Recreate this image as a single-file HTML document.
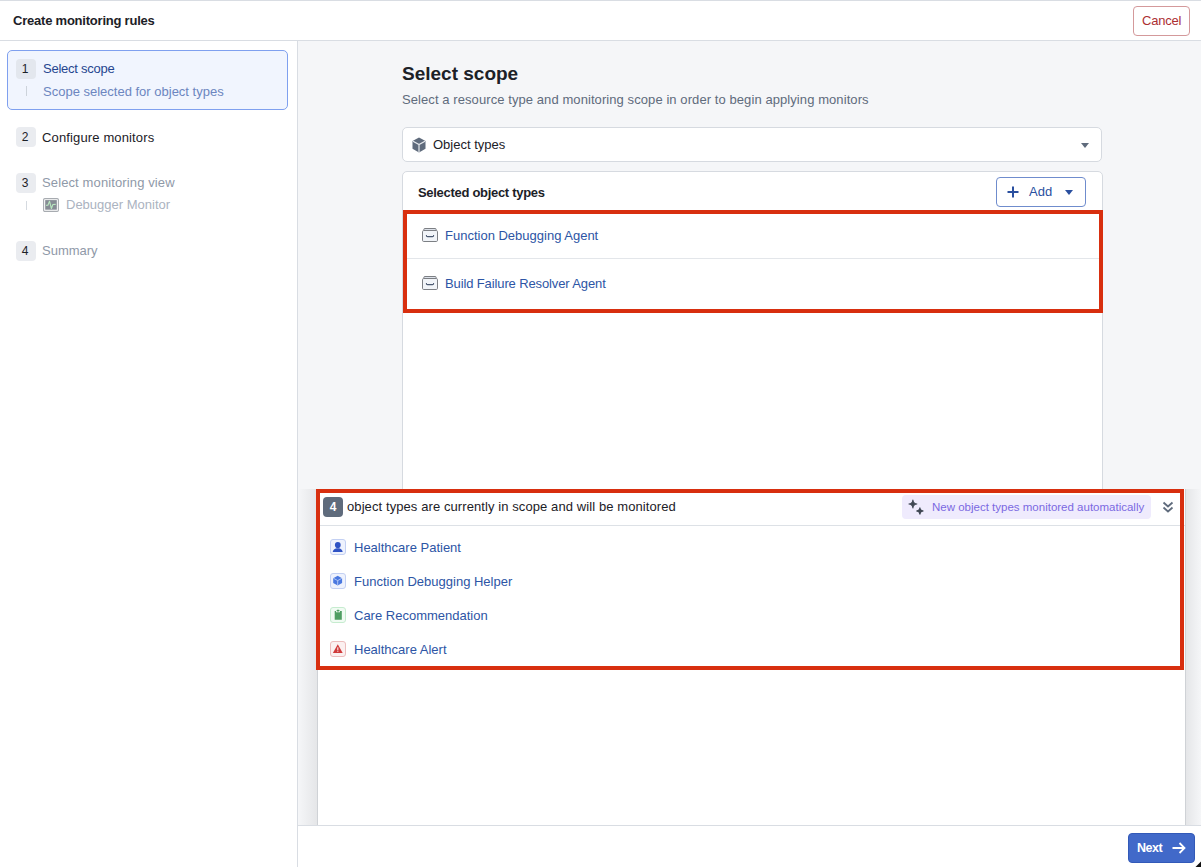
<!DOCTYPE html>
<html><head><meta charset="utf-8">
<style>
*{box-sizing:border-box;margin:0;padding:0}
html,body{width:1201px;height:867px;overflow:hidden;background:#fff;font-family:"Liberation Sans",sans-serif;color:#1c2127}
.a{position:absolute}
.t{position:absolute;white-space:nowrap;font-size:13px;line-height:16px}
.b{font-weight:700}
.badge{position:absolute;width:20px;height:20px;border-radius:4px;background:#eaecf0;font-size:12px;line-height:20px;text-align:center;text-indent:-2px;color:#1c2127}
</style></head><body>
<!-- top line -->
<div class="a" style="left:0;top:0;width:1201px;height:1px;background:#d9dde3"></div>
<!-- header -->
<div class="a" style="left:0;top:40px;width:1201px;height:1px;background:#d9dde3"></div>
<div class="t b" id="hdr" style="left:13px;top:13px;letter-spacing:-0.22px">Create monitoring rules</div>
<div class="a" style="left:1133px;top:6px;width:57px;height:30px;border:1px solid #d4999b;border-radius:4px"></div>
<div class="t" id="cancel" style="left:1142px;top:13px;letter-spacing:-0.2px;color:#ac2f33">Cancel</div>

<!-- sidebar -->
<div class="a" style="left:297px;top:41px;width:1px;height:826px;background:#d9dde3"></div>
<div class="a" style="left:7px;top:50px;width:281px;height:60px;border:1px solid #7fa0ef;border-radius:5px;background:#f1f5fe"></div>
<div class="badge" style="left:16px;top:59px;background:#e3e7ee">1</div>
<div class="t" id="s1" style="left:43px;top:61px;letter-spacing:-0.25px;color:#26468f">Select scope</div>
<div class="a" style="left:26px;top:86px;width:1px;height:10px;background:#cdd3db"></div>
<div class="t" id="s1b" style="left:43px;top:84px;color:#6c86c0">Scope selected for object types</div>

<div class="badge" style="left:16px;top:127px">2</div>
<div class="t" id="s2" style="left:42px;top:130px;letter-spacing:0.14px">Configure monitors</div>

<div class="badge" style="left:16px;top:173px">3</div>
<div class="t" id="s3" style="left:42px;top:175px;letter-spacing:0.12px;color:#8f99a8">Select monitoring view</div>
<div class="a" style="left:26px;top:201px;width:1px;height:9px;background:#d5dae0"></div>
<svg class="a" style="left:43px;top:198px" width="16" height="14" viewBox="0 0 16 14"><rect x="0.6" y="0.6" width="14.8" height="12.8" rx="1.2" fill="#fff" stroke="#a7abb0" stroke-width="1.1"/><rect x="2.2" y="2.1" width="11.6" height="9.6" fill="#868c94"/><polyline points="3.1,7.4 4.9,7.2 6.5,3.2 8.4,10.5 9.9,6.5 12.7,6.4" fill="none" stroke="#b8e6bf" stroke-width="1.1" stroke-linejoin="round"/></svg>
<div class="t" id="s3b" style="left:66px;top:197px;color:#abb3bf">Debugger Monitor</div>

<div class="badge" style="left:16px;top:241px">4</div>
<div class="t" id="s4" style="left:42px;top:243px;color:#8f99a8">Summary</div>

<!-- main bg -->
<div class="a" style="left:298px;top:41px;width:903px;height:784px;background:#f5f6f8"></div>
<div class="t b" id="title" style="left:402px;top:62px;font-size:19px;line-height:24px">Select scope</div>
<div class="t" id="sub" style="left:402px;top:92px;letter-spacing:0.08px;color:#5f6b7c">Select a resource type and monitoring scope in order to begin applying monitors</div>

<!-- dropdown -->
<div class="a" style="left:402px;top:127px;width:700px;height:35px;background:#fff;border:1px solid #d6dae0;border-radius:5px"></div>
<svg class="a" style="left:412px;top:137px" width="14" height="16" viewBox="0 0 14 16"><path d="M7 0.5 L13.5 4 L13.5 11.8 L7 15.5 L0.5 11.8 L0.5 4 Z" fill="#5f6b7c"/><path d="M1 4.2 L7 7.6 L13 4.2 M7 7.6 L7 15.3" fill="none" stroke="#e6e9ed" stroke-width="1.2"/></svg>
<div class="t" id="ot" style="left:433px;top:137px">Object types</div>
<svg class="a" style="left:1081px;top:143px" width="8" height="5" viewBox="0 0 8 5"><path d="M0 0 H8 L4 5 Z" fill="#5f6b7c"/></svg>

<!-- card -->
<div class="a" style="left:402px;top:171px;width:701px;height:700px;background:#fff;border:1px solid #d6dae0;border-radius:5px"></div>
<div class="t b" id="sot" style="left:418px;top:185px;letter-spacing:-0.3px">Selected object types</div>
<div class="a" style="left:996px;top:177px;width:90px;height:30px;border:1px solid #6f8ccd;border-radius:4px;background:#fff"></div>
<svg class="a" style="left:1007px;top:186px" width="12" height="12" viewBox="0 0 12 12"><path d="M6 0.5 V11.5 M0.5 6 H11.5" stroke="#2a4f9f" stroke-width="2"/></svg>
<div class="t" id="add" style="left:1029px;top:184px;color:#2a4f9f">Add</div>
<svg class="a" style="left:1065px;top:190px" width="8" height="5" viewBox="0 0 8 5"><path d="M0 0 H8 L4 5 Z" fill="#2a4f9f"/></svg>

<div class="a" style="left:407px;top:258px;width:692px;height:1px;background:#e3e6ea"></div>
<svg class="a" style="left:422px;top:228px" width="16" height="14" viewBox="0 0 16 14"><path d="M1.8 2.6 V1.6 Q1.8 0.5 2.9 0.5 H13.1 Q14.2 0.5 14.2 1.6 V2.6" fill="#dde2ea" stroke="#7c7f84"/><rect x="0.5" y="2.5" width="15" height="11" rx="1.2" fill="#f1f4f8" stroke="#7c7f84"/><path d="M4.3 6.9 Q4.3 8.6 5.6 8.6 H10.4 Q11.7 8.6 11.7 6.9" fill="none" stroke="#4a5870" stroke-width="1.05"/></svg>
<div class="t" id="it1" style="left:445px;top:228px;color:#2d55a5">Function Debugging Agent</div>
<svg class="a" style="left:422px;top:276px" width="16" height="14" viewBox="0 0 16 14"><path d="M1.8 2.6 V1.6 Q1.8 0.5 2.9 0.5 H13.1 Q14.2 0.5 14.2 1.6 V2.6" fill="#dde2ea" stroke="#7c7f84"/><rect x="0.5" y="2.5" width="15" height="11" rx="1.2" fill="#f1f4f8" stroke="#7c7f84"/><path d="M4.3 6.9 Q4.3 8.6 5.6 8.6 H10.4 Q11.7 8.6 11.7 6.9" fill="none" stroke="#4a5870" stroke-width="1.05"/></svg>
<div class="t" id="it2" style="left:445px;top:276px;letter-spacing:-0.12px;color:#2d55a5">Build Failure Resolver Agent</div>
<div class="a" style="left:403px;top:210px;width:700px;height:103px;border:4px solid #d82f0f"></div>

<!-- overlay panel -->
<div class="a" style="left:298px;top:489px;width:19px;height:336px;background:linear-gradient(to right,rgba(0,0,0,0),rgba(17,20,24,0.07))"></div>
<div class="a" style="left:1186px;top:489px;width:15px;height:336px;background:linear-gradient(to left,rgba(0,0,0,0),rgba(17,20,24,0.07))"></div>
<div class="a" style="left:317px;top:489px;width:869px;height:336px;background:#fff;border-left:1px solid #cfd2d6;border-right:1px solid #cfd2d6"></div>
<div class="badge" style="left:323px;top:497px;background:#5f6b7c;color:#fff;font-weight:700;font-size:12px;text-indent:0">4</div>
<div class="t" id="scope" style="left:347px;top:499px;letter-spacing:0.09px">object types are currently in scope and will be monitored</div>
<div class="a" style="left:902px;top:495px;width:249px;height:24px;background:#efebfd;border-radius:4px"></div>
<svg class="a" style="left:904px;top:496px" width="24" height="22" viewBox="0 0 24 22"><path d="M8.9 4.0 Q9.200000000000001 7.7 12.9 8 Q9.200000000000001 8.3 8.9 12.0 Q8.6 8.3 4.9 8 Q8.6 7.7 8.9 4.0Z M15.9 11.7 Q16.18 14.72 19.2 15 Q16.18 15.28 15.9 18.3 Q15.620000000000001 15.28 12.600000000000001 15 Q15.620000000000001 14.72 15.9 11.7Z" fill="#404854" stroke="#404854" stroke-width="1.1" stroke-linejoin="round"/></svg>
<div class="t" id="pill" style="left:932px;top:500px;font-size:11.5px;line-height:14px;color:#7b69e2">New object types monitored automatically</div>
<svg class="a" style="left:1162px;top:501px" width="12" height="13" viewBox="0 0 12 13"><path d="M1.5 1.5 L6 5.5 L10.5 1.5 M1.5 6.5 L6 10.5 L10.5 6.5" fill="none" stroke="#5f6b7c" stroke-width="1.8"/></svg>
<div class="a" style="left:320px;top:525px;width:865px;height:1px;background:#dde1e6"></div>

<!-- items -->
<div class="a" style="left:330px;top:539px;width:16px;height:16px;border:1px solid #c3d0f3;border-radius:3px;background:#eef2fd"></div>
<svg class="a" style="left:330px;top:539px" width="16" height="16" viewBox="0 0 16 16"><ellipse cx="7.8" cy="6" rx="2.9" ry="3.1" fill="#2e52c4"/><path d="M2.7 12.9 Q3.4 9.8 6.6 9.3 H9 Q12 9.8 12.7 12.9 Z" fill="#2e52c4"/></svg>
<div class="t" id="h1" style="left:354px;top:540px;color:#2d55a5">Healthcare Patient</div>

<div class="a" style="left:330px;top:573px;width:16px;height:16px;border:1px solid #c3d0f3;border-radius:3px;background:#eef2fd"></div>
<svg class="a" style="left:330px;top:573px" width="16" height="16" viewBox="0 0 16 16"><path d="M7.7 2.8 L12.1 5.2 L12.1 10.1 L7.7 12.5 L3.2 10.1 L3.2 5.2 Z" fill="#4a78e0"/><path d="M3.5 5.3 L7.7 7.6 L11.9 5.3 M7.7 7.6 V12.3" fill="none" stroke="#c8d7f7" stroke-width="0.8"/></svg>
<div class="t" id="h2" style="left:354px;top:574px;color:#2d55a5">Function Debugging Helper</div>

<div class="a" style="left:330px;top:607px;width:16px;height:16px;border:1px solid #c6eccf;border-radius:3px;background:#f1fbf3"></div>
<svg class="a" style="left:330px;top:607px" width="16" height="16" viewBox="0 0 16 16"><path d="M4.7 4 H6 V5.2 H10 V4 H11.8 V12.7 H4.7 Z" fill="#4f9e62"/><rect x="6.6" y="2.8" width="2.9" height="1.8" rx="0.8" fill="#4f9e62"/></svg>
<div class="t" id="h3" style="left:354px;top:608px;color:#2d55a5">Care Recommendation</div>

<div class="a" style="left:330px;top:641px;width:16px;height:16px;border:1px solid #ecbcbc;border-radius:3px;background:#fbf0f0"></div>
<svg class="a" style="left:330px;top:641px" width="16" height="16" viewBox="0 0 16 16"><path d="M7.8 3.3 L12.7 11.9 L2.9 11.9 Z" fill="#d03a3a"/><rect x="7.2" y="6.3" width="1.2" height="2.8" fill="#f6dada"/><rect x="7.2" y="9.7" width="1.2" height="1.1" fill="#f6dada"/></svg>
<div class="t" id="h4" style="left:354px;top:642px;color:#2d55a5">Healthcare Alert</div>

<div class="a" style="left:316px;top:489px;width:868px;height:181px;border:4px solid #d82f0f"></div>

<!-- footer -->
<div class="a" style="left:298px;top:825px;width:903px;height:42px;background:#fff;border-top:1px solid #d9dde3"></div>
<div class="a" style="left:1128px;top:833px;width:67px;height:30px;background:#4169c9;border:1px solid #3259b8;border-radius:4px"></div>
<div class="t b" id="next" style="left:1137px;top:840px;font-size:12.5px;letter-spacing:-0.45px;color:#fff">Next</div>
<svg class="a" style="left:1172px;top:842px" width="14" height="12" viewBox="0 0 14 12"><path d="M0.5 6 H12.5 M7.5 1 L12.5 6 L7.5 11" fill="none" stroke="#fff" stroke-width="1.8"/></svg>
<svg class="a" style="left:1195px;top:861px" width="6" height="6" viewBox="0 0 6 6"><path d="M6 0.5 L6 6 L0.5 6 Z" fill="#111"/></svg>
</body></html>
